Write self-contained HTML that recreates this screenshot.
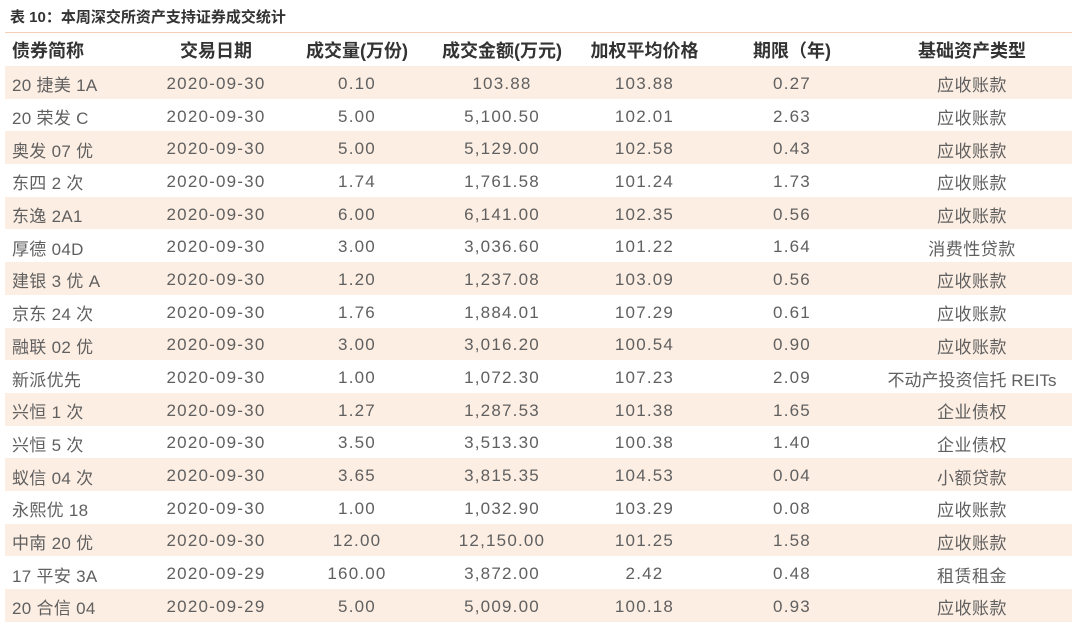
<!DOCTYPE html>
<html><head><meta charset="utf-8"><style>
body{margin:0;width:1080px;height:624px;background:#fff;font-family:"Liberation Sans","Noto Sans CJK SC",sans-serif;overflow:hidden;position:relative}
.title{position:absolute;left:10px;top:6px;font-size:15px;font-weight:bold;color:#333}
.line{position:absolute;left:5px;width:1067px;height:1px;background:#f5cfb3}
table{position:absolute;left:5px;top:33px;width:1067px;border-collapse:collapse}
td{height:32.7px;padding:3px 0 0 0;box-sizing:border-box;font-size:17px;color:#606060;text-align:center;white-space:nowrap;letter-spacing:1.2px}
th{height:33px;padding:0;font-size:18px;color:#333;font-weight:bold;text-align:center}
tr.s td{background:#fdeee3}
td:first-child,th:first-child{text-align:left;padding-left:7px}
td:first-child{letter-spacing:0.3px}
td:last-child{letter-spacing:0.5px}
</style></head><body>
<div class="title">表 10：本周深交所资产支持证券成交统计</div>
<div class="line" style="top:32px"></div>
<div class="line" style="top:66px"></div>
<table>
<colgroup><col style="width:140px"><col style="width:142px"><col style="width:140px"><col style="width:150px"><col style="width:135px"><col style="width:160px"><col style="width:200px"></colgroup>
<tr><th>债券简称</th><th>交易日期</th><th>成交量(万份)</th><th>成交金额(万元)</th><th>加权平均价格</th><th>期限（年)</th><th>基础资产类型</th></tr>
<tr class="s"><td>20 捷美 1A</td><td>2020-09-30</td><td>0.10</td><td>103.88</td><td>103.88</td><td>0.27</td><td>应收账款</td></tr>
<tr><td>20 荣发 C</td><td>2020-09-30</td><td>5.00</td><td>5,100.50</td><td>102.01</td><td>2.63</td><td>应收账款</td></tr>
<tr class="s"><td>奥发 07 优</td><td>2020-09-30</td><td>5.00</td><td>5,129.00</td><td>102.58</td><td>0.43</td><td>应收账款</td></tr>
<tr><td>东四 2 次</td><td>2020-09-30</td><td>1.74</td><td>1,761.58</td><td>101.24</td><td>1.73</td><td>应收账款</td></tr>
<tr class="s"><td>东逸 2A1</td><td>2020-09-30</td><td>6.00</td><td>6,141.00</td><td>102.35</td><td>0.56</td><td>应收账款</td></tr>
<tr><td>厚德 04D</td><td>2020-09-30</td><td>3.00</td><td>3,036.60</td><td>101.22</td><td>1.64</td><td>消费性贷款</td></tr>
<tr class="s"><td>建银 3 优 A</td><td>2020-09-30</td><td>1.20</td><td>1,237.08</td><td>103.09</td><td>0.56</td><td>应收账款</td></tr>
<tr><td>京东 24 次</td><td>2020-09-30</td><td>1.76</td><td>1,884.01</td><td>107.29</td><td>0.61</td><td>应收账款</td></tr>
<tr class="s"><td>融联 02 优</td><td>2020-09-30</td><td>3.00</td><td>3,016.20</td><td>100.54</td><td>0.90</td><td>应收账款</td></tr>
<tr><td>新派优先</td><td>2020-09-30</td><td>1.00</td><td>1,072.30</td><td>107.23</td><td>2.09</td><td style="letter-spacing:0">不动产投资信托 REITs</td></tr>
<tr class="s"><td>兴恒 1 次</td><td>2020-09-30</td><td>1.27</td><td>1,287.53</td><td>101.38</td><td>1.65</td><td>企业债权</td></tr>
<tr><td>兴恒 5 次</td><td>2020-09-30</td><td>3.50</td><td>3,513.30</td><td>100.38</td><td>1.40</td><td>企业债权</td></tr>
<tr class="s"><td>蚁信 04 次</td><td>2020-09-30</td><td>3.65</td><td>3,815.35</td><td>104.53</td><td>0.04</td><td>小额贷款</td></tr>
<tr><td>永熙优 18</td><td>2020-09-30</td><td>1.00</td><td>1,032.90</td><td>103.29</td><td>0.08</td><td>应收账款</td></tr>
<tr class="s"><td>中南 20 优</td><td>2020-09-30</td><td>12.00</td><td>12,150.00</td><td>101.25</td><td>1.58</td><td>应收账款</td></tr>
<tr><td>17 平安 3A</td><td>2020-09-29</td><td>160.00</td><td>3,872.00</td><td>2.42</td><td>0.48</td><td>租赁租金</td></tr>
<tr class="s"><td>20 合信 04</td><td>2020-09-29</td><td>5.00</td><td>5,009.00</td><td>100.18</td><td>0.93</td><td>应收账款</td></tr>
</table>
</body></html>
